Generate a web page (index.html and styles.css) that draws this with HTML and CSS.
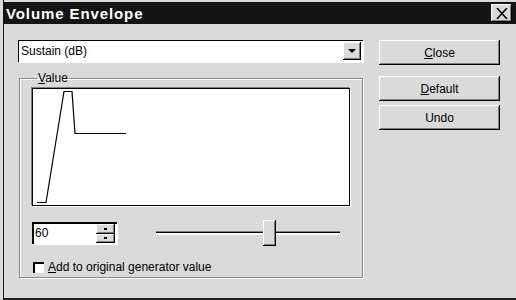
FILE: index.html
```html
<!DOCTYPE html>
<html lang="en">
<head>
    <meta charset="UTF-8">
    <title>Volume Envelope</title>
    <link rel="stylesheet" href="styles.css">
</head>
<body>

    <div class="window">
        <!-- Title Bar -->
        <div class="titlebar">
            <span class="title">Volume Envelope</span>
            <button class="close-x">
                <svg width="12" height="11" viewBox="0 0 12 11"><path d="M1 0 L11 11 M11 0 L1 11" stroke="#000" stroke-width="1.6"/></svg>
            </button>
        </div>

        <div class="content">
            <!-- Left Column -->
            <div class="left">
                <div class="combo">
                    <span class="combo-text">Sustain (dB)</span>
                    <span class="combo-btn">
                        <svg width="8" height="5" viewBox="0 0 8 5"><path d="M0 0 H8 L4 4 Z" fill="#000"/></svg>
                    </span>
                </div>

                <fieldset class="group">
                    <legend><u>V</u>alue</legend>

                    <div class="graph">
                        <svg width="315" height="115" viewBox="0 0 315 115">
                            <polyline points="3,112.5 12,112.5 30,1.5 38,1.5 41,43.5 92,43.5" fill="none" stroke="#000" stroke-width="1.2"/>
                        </svg>
                    </div>

                    <div class="controls">
                        <div class="spin">
                            <span class="spin-text">60</span>
                            <div class="spin-btns">
                                <span class="spin-btn"><svg width="3" height="2"><rect width="3" height="2" fill="#000"/></svg></span>
                                <span class="spin-btn"><svg width="3" height="2"><rect width="3" height="2" fill="#000"/></svg></span>
                            </div>
                        </div>
                        <div class="slider">
                            <div class="track"></div>
                            <div class="thumb"></div>
                        </div>
                    </div>

                    <label class="check">
                        <span class="box"></span>
                        <span><u>A</u>dd to original generator value</span>
                    </label>
                </fieldset>
            </div>

            <!-- Right Column -->
            <div class="right">
                <button class="btn"><u>C</u>lose</button>
                <button class="btn btn-gap"><u>D</u>efault</button>
                <button class="btn">Undo</button>
            </div>
        </div>
    </div>

</body>
</html>
```

FILE: styles.css
```css
/* Reset */
* {
    margin: 0;
    padding: 0;
    box-sizing: border-box;
}

body {
    width: 516px;
    height: 300px;
    overflow: hidden;
    background-color: #dadada;
    font-family: 'Liberation Sans', Arial, sans-serif;
    font-size: 12px;
    color: #000;
}

/* Window frame */
.window {
    width: 516px;
    height: 300px;
    padding: 2px 0 0 1px;
    background-color: #dadada;
    border-left: 1px solid #dadada;
    box-shadow: inset 2px 0 0 #dadada, inset 3px 0 0 #1a1a1a, inset 0 -2px 0 #1a1a1a;
}

/* Title Bar */
.titlebar {
    height: 22px;
    margin-left: 1px;
    background-color: #141414;
    display: flex;
    align-items: center;
    justify-content: space-between;
    padding: 0 3px;
}

.title {
    color: #fff;
    font-weight: bold;
    font-size: 15px;
    letter-spacing: 0.9px;
}

.close-x {
    width: 21px;
    height: 18px;
    background-color: #dadada;
    border: none;
    box-shadow: inset -1px -1px 0 #000, inset 1px 1px 0 #fff, inset -2px -2px 0 #808080;
    display: flex;
    align-items: center;
    justify-content: center;
    margin-right: 1px;
}

/* Content */
.content {
    display: flex;
    padding: 16px 0 0 16px;
}

.left {
    width: 345px;
}

.right {
    display: flex;
    flex-direction: column;
    margin-left: 16px;
}

/* Combo box */
.combo {
    height: 22px;
    background-color: #fff;
    display: flex;
    align-items: center;
    justify-content: space-between;
    padding: 0 2px 0 3px;
    box-shadow: inset 1px 1px 0 #000, 1px 1px 0 #fff;
}

.combo-btn {
    width: 18px;
    height: 18px;
    background-color: #dadada;
    box-shadow: inset -1px -1px 0 #000, inset 1px 1px 0 #fff, inset -2px -2px 0 #808080;
    display: flex;
    align-items: center;
    justify-content: center;
}

/* Group box */
.group {
    margin-top: 10px;
    margin-left: 1px;
    height: 206px;
    border: 1px solid #888;
    box-shadow: inset 1px 1px 0 #fff, 1px 1px 0 #fff;
    padding: 4px 12px 0 12px;
}

.group legend {
    margin-left: 5px;
    padding: 0 1px;
    line-height: 12px;
}

.graph {
    width: 318px;
    height: 118px;
    background-color: #fff;
    border: 1px solid #000;
    box-shadow: -1px -1px 0 #808080, 1px 1px 0 #fff;
    padding: 1px 0 0 1px;
}

.graph svg {
    display: block;
}

/* Spinner + slider row */
.controls {
    display: flex;
    align-items: center;
    margin-top: 14px;
}

.spin {
    width: 85px;
    height: 22px;
    background-color: #fff;
    box-shadow: inset 1px 1px 0 #000, inset 2px 2px 0 #000, 1px 1px 0 #fff;
    display: flex;
    justify-content: space-between;
    padding: 2px 2px 1px 3px;
}

.spin-text {
    line-height: 18px;
}

.spin-btns {
    display: flex;
    flex-direction: column;
    width: 19px;
}

.spin-btn {
    flex: 1;
    background-color: #dadada;
    box-shadow: inset -1px -1px 0 #000, inset 1px 1px 0 #fff, inset -2px -2px 0 #808080;
    display: flex;
    align-items: center;
    justify-content: center;
}

.slider {
    position: relative;
    width: 184px;
    height: 26px;
    margin-left: 39px;
}

.track {
    position: absolute;
    left: 0;
    right: 0;
    top: 11px;
    height: 3px;
    background-color: #dadada;
    box-shadow: inset 0 1px 0 #808080, inset 0 2px 0 #000, 0 1px 0 #fff;
    border-bottom: 1px solid #fff;
}

.thumb {
    position: absolute;
    left: 107px;
    top: 0;
    width: 13px;
    height: 26px;
    background-color: #dadada;
    box-shadow: inset -1px -1px 0 #000, inset 1px 1px 0 #fff, inset -2px -2px 0 #808080;
}

/* Checkbox */
.check {
    display: flex;
    align-items: center;
    margin-top: 14px;
    margin-left: 1px;
}

.box {
    width: 11px;
    height: 11px;
    background-color: #fff;
    box-shadow: inset 1px 1px 0 #000, inset 2px 2px 0 #000;
    margin-right: 4px;
}

/* Buttons */
.btn {
    width: 121px;
    height: 25px;
    background-color: #dadada;
    border: none;
    font-family: 'Liberation Sans', Arial, sans-serif;
    font-size: 12px;
    color: #000;
    box-shadow: inset -1px -1px 0 #000, inset 1px 1px 0 #fff, inset -2px -2px 0 #808080;
}

.btn-gap {
    margin-top: 11px;
    margin-bottom: 4px;
}
```
